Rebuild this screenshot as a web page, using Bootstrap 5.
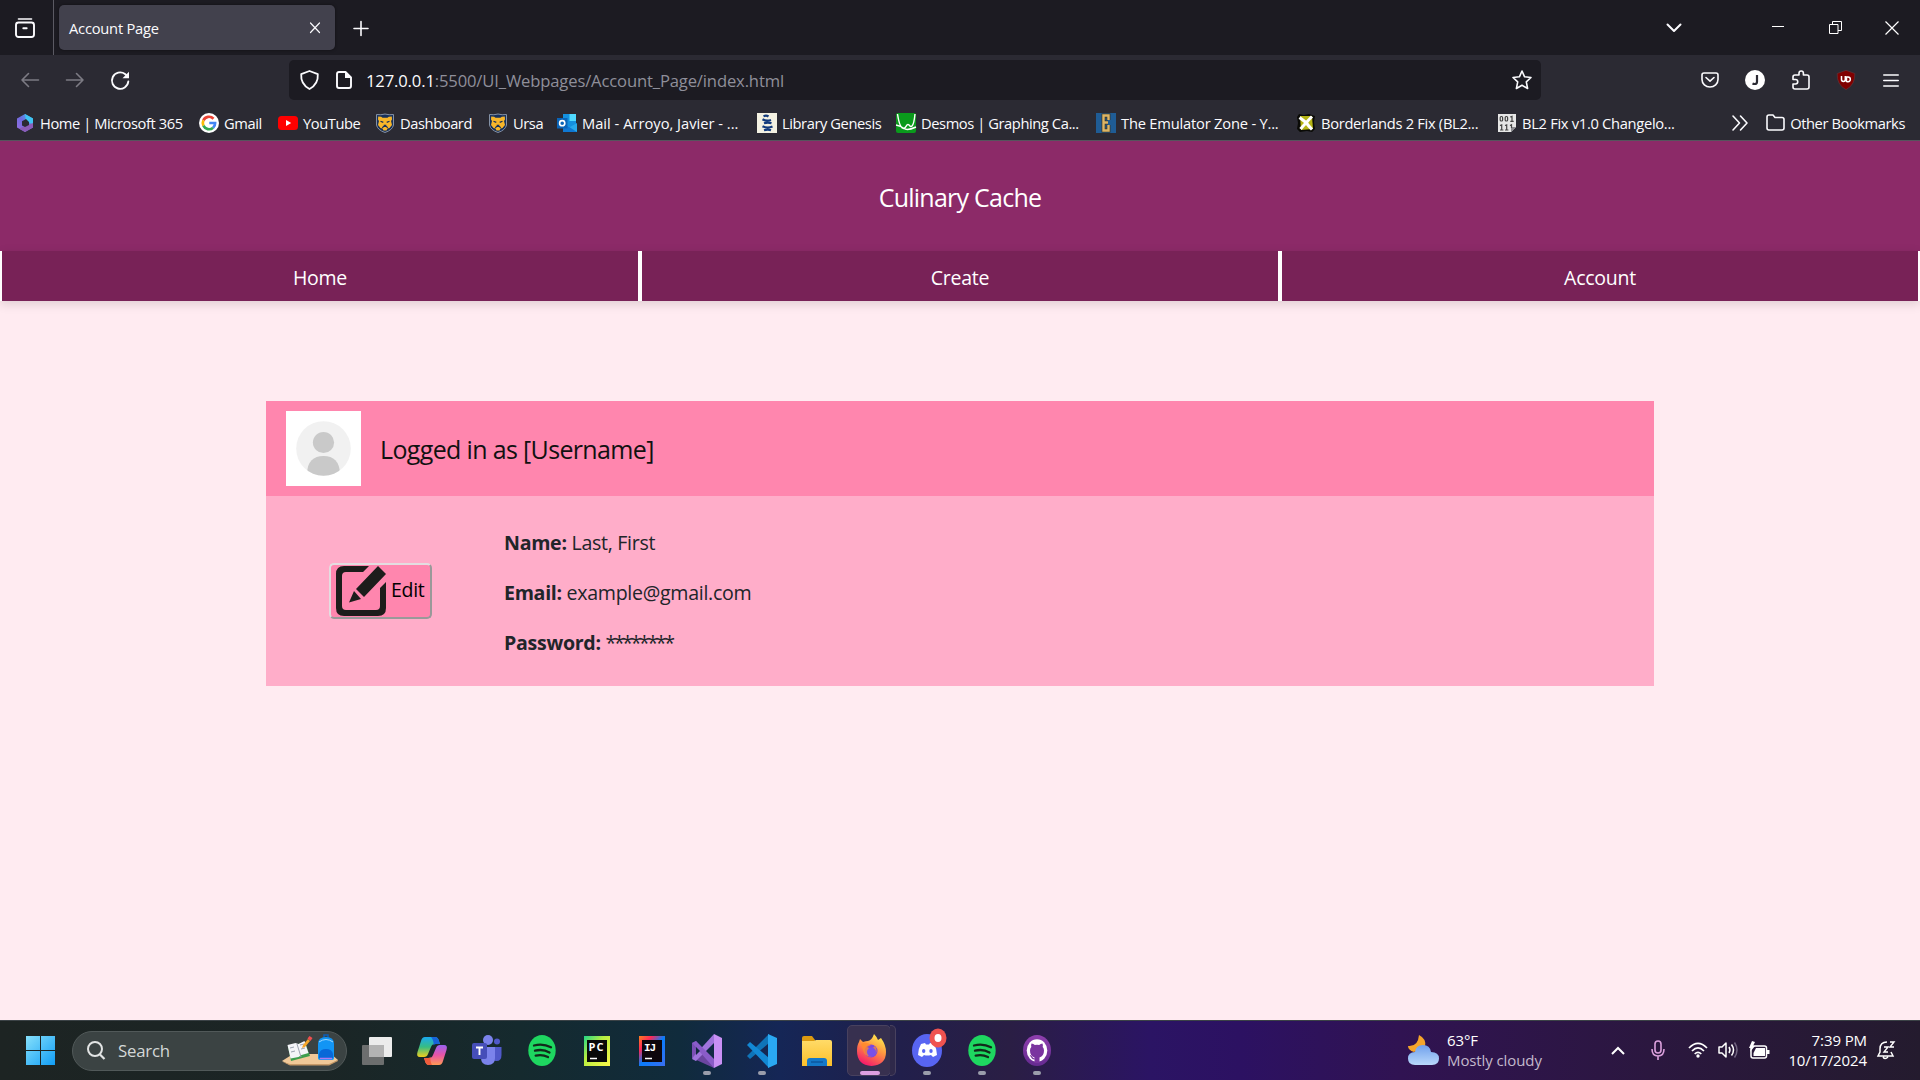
<!DOCTYPE html>
<html lang="en">
<head>
<meta charset="utf-8">
<meta name="viewport" content="width=device-width, initial-scale=1">
<title>Account Page</title>
<link rel="stylesheet" href="https://cdn.jsdelivr.net/npm/bootstrap@5.3.0/dist/css/bootstrap.min.css">
<style>
html, body { height: 1080px; overflow: hidden; }
body { font-family: "Open Sans", "Noto Sans", sans-serif; background: #ffebf1; }
svg { display: block; flex: none; overflow: visible; }
.ln { fill: none; stroke: #fbfbfe; stroke-width: 1.6; stroke-linecap: round; stroke-linejoin: round; }

/* browser window */
.tabstrip { height: 55px; background: #1c1b22; }
.recent { width: 54px; border-right: 1px solid #5b5a63; padding-left: 15px; }
.tab { width: 276px; height: 45px; margin-left: 5px; padding: 0 14px 0 10px; background: #42414d; border-radius: 5px; color: #fbfbfe; font-size: 14.7px; letter-spacing: -.22px; box-shadow: 0 0 3px rgba(0,0,0,.5); }
.tabname { padding-top: 2px; }
.newtab { margin-left: 18px; }
.wincontrols { padding-right: 21px; }
.toolbar { height: 52px; background: #2b2a33; padding-top: 5px; }
.navbtns { width: 289px; padding-left: 21px; gap: 26px; }
.urlbar { width: 1252px; height: 40px; background: #1c1b22; border-radius: 5px; padding: 0 9px 0 11px; font-size: 16.6px; letter-spacing: -.14px; color: #8f8f9a; }
.urlbar b { font-weight: 400; color: #fbfbfe; }
.url { margin-left: 14px; padding-top: 3px; }
.exts { padding-left: 160px; gap: 26px; }
.bookmarks { height: 34px; background: #2b2a33; border-bottom: 1px solid #55545c; padding: 0 15px 1px 15px; color: #fbfbfe; font-size: 14.7px; letter-spacing: -.42px; white-space: nowrap; }
.bookmarks span { padding-top: 1px; }
.bm { gap: 5px; flex: none; }
.fit-0 { letter-spacing: 0; }
.fit-2 { letter-spacing: -.2px; }
.fit-3 { letter-spacing: -.3px; }

/* page */
.site { height: 879px; }
.brandbar { height: 110px; background: #8c2a68; color: #fff; font-size: 25px; letter-spacing: -.75px; padding-top: 4px; }
.mainnav { height: 50px; box-shadow: 0 3px 10px rgba(0,0,0,.13); }
.mainnav a { background: #782257; border: solid #fff; border-width: 0 2px; color: #fff; font-size: 19.5px; letter-spacing: -.25px; text-decoration: none; padding-top: 4px; }
.panel { width: 1388px; margin: 100px auto 0; }
.panel-top { height: 95px; background: #ff86ae; padding: 0 20px; gap: 19px; font-size: 25px; letter-spacing: -.65px; color: #111; }
.login { padding-top: 2px; }
.panel-main { height: 190px; background: #ffadc9; color: #212529; font-size: 19.6px; letter-spacing: -.3px; }
.editcol { width: 238px; padding-left: 63px; }
.editbtn { width: 103px; height: 56px; background: #ff86ae; border: 2px solid; border-color: #e3dde0 #999 #999 #e3dde0; border-radius: 5px; padding: 0 5px; color: #000; font-size: 19.5px; letter-spacing: -.3px; gap: 5px; }
.edittext { padding-bottom: 3px; }
.info { gap: 20px; padding-top: 3px; }
.info > div { height: 30px; line-height: 30px; }
.stars { letter-spacing: -2.4px; }

/* taskbar */
.taskbar { height: 60px; border-top: 1px solid #3b4246; background: linear-gradient(90deg, #1d2423 0, #1b2525 320px, #152a2e 520px, #102b3c 680px, #152656 780px, #211f4b 900px, #2a1e44 1010px, #2b1464 1150px, #2c1162 1240px, #301352 1400px, #2b173f 1650px, #241b2e 1920px); color: #fff; }
.search { width: 275px; height: 40px; margin-left: 17px; border-radius: 20px; background: #3b4343; border: 1px solid #515959; color: #d4d8d8; font-size: 16.8px; letter-spacing: -.2px; padding: 0 7px 0 14px; gap: 13px; }
.app { width: 55px; height: 59px; }
.app i { position: absolute; bottom: 5px; left: 24px; width: 8px; height: 4px; border-radius: 2px; background: #9a9dab; }
.app.active::before { content: ""; position: absolute; left: 3px; top: 4px; width: 44px; height: 51px; border-radius: 5px; background: #37304f; border: 1px solid #48415e; }
.app.active::after { content: ""; position: absolute; left: 46px; top: 4px; width: 6px; height: 51px; border-radius: 0 5px 5px 0; border: 1px solid #48415e; border-left: 0; background: #2f294a; }
.app.active svg, .app.active i { position: absolute; z-index: 1; }
.app.active svg { left: 13px; top: 13px; }
.app.active i { width: 20px; left: 16px; background: #dd9fe2; }
.tray { font-size: 15px; letter-spacing: -.1px; line-height: 20px; padding-bottom: 1px; }
</style>
</head>
<body>
<svg width="0" height="0" class="position-absolute">
  <defs>
    <linearGradient id="gw" x1="0" y1="0" x2="1" y2="1"><stop stop-color="#86e0fb"/><stop offset="1" stop-color="#119df5"/></linearGradient>
    <linearGradient id="gm" x1="0" y1="1" x2="1" y2="0"><stop stop-color="#9b6ee0"/><stop offset=".5" stop-color="#6f6be0"/><stop offset="1" stop-color="#35c1f0"/></linearGradient>
    <linearGradient id="gc1" x1="0" y1="0" x2="0" y2="1"><stop stop-color="#1aa9f0"/><stop offset=".5" stop-color="#37bd82"/><stop offset="1" stop-color="#f2cf1d"/></linearGradient>
    <linearGradient id="gc2" x1="0" y1="0" x2="0" y2="1"><stop stop-color="#9a62f0"/><stop offset=".5" stop-color="#e854a6"/><stop offset="1" stop-color="#ff9a54"/></linearGradient>
    <linearGradient id="gpc" x1="0" y1="0" x2="1" y2="1"><stop stop-color="#21d789"/><stop offset=".4" stop-color="#b7ee40"/><stop offset="1" stop-color="#fcf84a"/></linearGradient>
    <linearGradient id="gij" x1="0" y1="0" x2="1" y2="1"><stop stop-color="#fc801d"/><stop offset=".25" stop-color="#fe2857"/><stop offset=".5" stop-color="#087cfa"/><stop offset="1" stop-color="#3b6ef0"/></linearGradient>
    <linearGradient id="gff" x1=".8" y1="0" x2=".3" y2="1"><stop stop-color="#fff44f"/><stop offset=".45" stop-color="#ff9640"/><stop offset="1" stop-color="#f5156c"/></linearGradient>
    <linearGradient id="gfo" x1="0" y1="0" x2="0" y2="1"><stop stop-color="#ffdb68"/><stop offset="1" stop-color="#fbbf2a"/></linearGradient>
    <linearGradient id="gcl" x1="0" y1="0" x2="0" y2="1"><stop stop-color="#6fa0ec"/><stop offset="1" stop-color="#b9d8fb"/></linearGradient>
    <linearGradient id="ggh" x1="0" y1="0" x2="0" y2="1"><stop stop-color="#8e3fae"/><stop offset="1" stop-color="#652a90"/></linearGradient>
    <symbol id="bear" viewBox="0 0 20 20"><path d="M1.500 1.500Q6 2.200 10 1Q14 2.200 18.500 1.500V12Q17.500 17 10 19.500Q2.500 17 1.500 12Z" fill="#17305a" stroke="#8592a6"/><path d="M3.200 3.500l3 .3 1.300 1h5l1.300-1 3-.3.200 3-1 1.500 1 4-2.500 3-2 .6-1 1.900h-3l-1-1.900-2-.6L3 12l1-4-1-1.500z" fill="#f8b62a"/><path d="M5.500 8.200l2.800 1.200M14.500 8.200l-2.800 1.200M8.700 12.300h2.600M7.300 14.800l1.200-1.300h3l1.200 1.300" stroke="#17305a" stroke-width="1.200" fill="none"/></symbol>
    <symbol id="spot" viewBox="0 0 28 31"><ellipse cx="14" cy="15.500" rx="13.700" ry="15.500" fill="#1ed760"/><path d="M6 10.500q9-2.500 17 1.800M7 15.700q8-2 14.500 1.800M7.700 20.600q6.600-1.600 12.300 1.500" fill="none" stroke="#122a1b" stroke-width="2.300" stroke-linecap="round"/></symbol>
  </defs>
</svg>

<header>
  <div class="tabstrip d-flex align-items-center">
    <div class="recent h-100 d-flex align-items-center">
      <svg width="20" height="20" viewBox="0 0 20 20"><path class="ln" d="M3.500 1h13"/><rect class="ln" style="stroke-width:1.900" x="1" y="4.500" width="18" height="14.500" rx="2.500"/><path class="ln" style="stroke-width:1.900" d="M8.300 10.300h3.400"/></svg>
    </div>
    <div class="tab d-flex align-items-center justify-content-between"><span class="tabname">Account Page</span>
      <svg width="12" height="12" viewBox="0 0 12 12"><path class="ln" style="stroke-width:1.200" d="M1.500 1l9 9.500M10.500 1l-9 9.500"/></svg></div>
    <svg class="newtab" width="16" height="16" viewBox="0 0 16 16"><path class="ln" d="M8 1.500v14M1 8.500h14"/></svg>
    <div class="wincontrols ms-auto d-flex align-items-center">
      <svg width="16" height="10" viewBox="0 0 16 10"><path class="ln" style="stroke-width:2" d="M1.500 1.500L8 8l6.500-6.500"/></svg>
      <svg width="12" height="2" viewBox="0 0 12 2" style="margin-left:90px"><path d="M0-1h12v1H0z" fill="#fff"/></svg>
      <svg width="13" height="13" viewBox="0 0 13 13" style="margin-left:45px"><path d="M.5 3.500h8.500v9H.5zM3.500 3.500V.5h9v9H9" fill="none" stroke="#fff"/></svg>
      <svg width="14" height="14" viewBox="0 0 14 14" style="margin-left:43px"><path d="M.5.5l13 13M13.500.5l-13 13" fill="none" stroke="#fff" stroke-width="1.200"/></svg>
    </div>
  </div>

  <div class="toolbar d-flex align-items-start">
    <div class="navbtns d-flex align-items-center" style="height:40px">
      <svg width="19" height="16" viewBox="0 0 19 16"><path class="ln" style="stroke:#7c7b84" d="M17.500 8H1M7.500 1.500L1 8 7.500 14.500"/></svg>
      <svg width="19" height="16" viewBox="0 0 19 16"><path class="ln" style="stroke:#7c7b84" d="M.5 8H17M10.500 1.500L17 8 10.500 14.500"/></svg>
      <svg width="19" height="19" viewBox="0 0 19 19"><path class="ln" style="stroke-width:1.900" d="M17.300 10.500A8.200 8.200 0 1 1 14 3l2 1.800"/><path d="M18 .8v6.500h-6.500z" fill="#fbfbfe"/></svg>
    </div>
    <div class="urlbar d-flex align-items-center">
      <svg width="19" height="20" viewBox="0 0 19 20"><path class="ln" style="stroke-width:1.800" d="M9.500 1L17.800 4.200Q18.500 14 9.500 19Q.5 14 1.200 4.200Z"/></svg>
      <svg width="16" height="18" viewBox="0 0 16 18" style="margin-left:17px"><path class="ln" style="stroke-width:1.900" d="M9.500 1H3Q1 1 1 3V15Q1 17 3 17H13Q15 17 15 15V6.500Z"/><path d="M9 1v6h6z" fill="#fbfbfe"/></svg>
      <span class="url"><b>127.0.0.1</b>:5500/UI_Webpages/Account_Page/index.html</span>
      <svg class="ms-auto" width="20" height="20" viewBox="0 0 20 20"><path class="ln" d="M10 1l2.600 5.800 6.400.7-4.700 4.300 1.300 6.700L10 15.300 4.400 18.500l1.300-6.700L1 7.500l6.400-.7z"/></svg>
    </div>
    <div class="exts d-flex align-items-center" style="height:40px">
      <svg width="18" height="16" viewBox="0 0 18 16"><path class="ln" d="M3 1h12q2 0 2 2v4.500a8 7.500 0 0 1-16 0V3q0-2 2-2zM5 5.500l4 3.700 4-3.700"/></svg>
      <svg width="20" height="20" viewBox="0 0 20 20"><circle cx="10" cy="10" r="10" fill="#fff"/><path class="ln" style="stroke:#2b2a33;stroke-width:2.200;stroke-linecap:butt" d="M12 5v6.700q0 2.300-2.300 2.300-1.200 0-2.200-.5"/></svg>
      <svg width="18" height="20" viewBox="0 0 18 20" style="margin-left:1px"><path class="ln" d="M7 5V3.200a2.200 2.200 0 0 1 4.400 0V5H15q2 0 2 2v10q0 2-2 2H3q-2 0-2-2v-3h2.500a2 2 0 0 0 0-4.500H1V7q0-2 2-2z"/></svg>
      <svg width="20" height="20" viewBox="0 0 20 20"><path d="M10 .3L18.800 3.500Q19.500 14.500 10 19.700Q.5 14.500 1.200 3.500Z" fill="#800000" stroke="#5d3a42" stroke-width=".6"/><path d="M5.500 6v3.500a1.900 1.900 0 0 0 3.800 0V6M10.500 11.700h1.500a2.300 2.300 0 0 0 0-4.700h-1.500v5" fill="none" stroke="#fff" stroke-width="1.500"/></svg>
      <svg width="16" height="13" viewBox="0 0 16 13" style="margin-left:1px"><path class="ln" d="M.8 1h14.400M.8 6.500h14.400M.8 12h14.400"/></svg>
    </div>
  </div>

  <nav class="bookmarks d-flex align-items-center">
    <div class="bm d-flex align-items-center" style="width:184px"><svg width="20" height="20" viewBox="0 0 20 20"><path d="M10 1l8 4.500v9L10 19l-8-4.500v-9z" fill="url(#gm)"/><path d="M10 1l8 4.500v6L11 8z" fill="#3fc4f3"/><path d="M18 10v4.500L10 19l-6-3.400z" fill="#8b5cb8"/><path d="M7 8.200L11 6l3 3v3l-4 2-3-1.500z" fill="#2b2a33"/></svg><span>Home | Microsoft 365</span></div>
    <div class="bm d-flex align-items-center" style="width:79px"><svg width="20" height="20" viewBox="0 0 20 20"><circle cx="10" cy="10" r="10" fill="#fff"/><g fill="none" stroke-width="2.700"><path d="M14.500 5.700A6.200 6.200 0 0 0 4.400 7.300" stroke="#ea4335"/><path d="M4.400 7.300a6.200 6.200 0 0 0 0 5.400" stroke="#fbbc05"/><path d="M4.400 12.700a6.200 6.200 0 0 0 9.700 2" stroke="#34a853"/><path d="M14.100 14.700A6.200 6.200 0 0 0 16.100 10H10.300" stroke="#4285f4"/></g></svg><span>Gmail</span></div>
    <div class="bm d-flex align-items-center" style="width:97px"><svg width="20" height="20" viewBox="0 0 20 20"><rect y="3" width="20" height="14" rx="3.500" fill="#f00"/><path d="M8 7l5.200 3L8 13z" fill="#fff"/></svg><span>YouTube</span></div>
    <div class="bm d-flex align-items-center" style="width:113px"><svg width="20" height="20"><use href="#bear"/></svg><span>Dashboard</span></div>
    <div class="bm d-flex align-items-center" style="width:69px"><svg width="20" height="20"><use href="#bear"/></svg><span>Ursa</span></div>
    <div class="bm fit-0 d-flex align-items-center" style="width:200px"><svg width="20" height="20" viewBox="0 0 20 20"><rect x="6" y="1" width="13" height="14" fill="#1490df"/><rect x="12.500" y="1" width="6.500" height="7" fill="#50d9ff"/><path d="M6 10l7 4 7-4v9H6z" fill="#28a8ea"/><path d="M6 10v9h14z" fill="#0f78d4"/><rect y="5" width="10.500" height="10.500" fill="#0a64b8"/><circle cx="5.200" cy="10.200" r="2.600" fill="none" stroke="#fff" stroke-width="1.600"/></svg><span>Mail - Arroyo, Javier - ...</span></div>
    <div class="bm d-flex align-items-center" style="width:139px"><svg width="20" height="20" viewBox="0 0 20 20"><path d="M0 0h20v20H0z" fill="#f3f1e2"/><path d="M6.500 3.200q3-1.200 5 .3M5.500 6.200q4 2.500 8.500.8M7 10.300q4-1.300 7.500 0M5.500 13.200q5 2.500 10 .3M7 17.200q4-1 7 0" stroke="#123a7c" stroke-width="2.200" fill="none"/></svg><span>Library Genesis</span></div>
    <div class="bm d-flex align-items-center" style="width:200px"><svg width="20" height="20" viewBox="0 0 20 20"><rect width="20" height="20" rx="2" fill="#0a9a1c"/><path d="M1.500 1C3 11 5 15.500 7.500 15.500S10 11.500 12 11.500 14 15 16 13 18.500 6 19 1M0 12q5 1 8 3.500t12-1.500" fill="none" stroke="#fff" stroke-width="1.400"/></svg><span>Desmos | Graphing Ca...</span></div>
    <div class="bm fit-2 d-flex align-items-center" style="width:200px"><svg width="20" height="20" viewBox="0 0 20 20"><path d="M0 0h20v20H0z" fill="#1f5c95"/><path d="M12.500 7V2.500h-5v15h5V12M8 9.500h4" fill="none" stroke="#3b3322" stroke-width="3.800"/><path d="M12.500 7V2.500h-5v15h5V12M8 9.500h4" fill="none" stroke="#dcb566" stroke-width="2.400"/></svg><span>The Emulator Zone - Y...</span></div>
    <div class="bm fit-3 d-flex align-items-center" style="width:201px"><svg width="20" height="20" viewBox="0 0 20 20"><path d="M3 1l5 1 5-1 6 2-1 6 1 7-3 3-5-1-7 1-3-3 1-6-1-6z" fill="#0a0a06"/><path d="M4 3h12l1 13-12 1z" fill="#b5b415"/><path d="M3.500 4.500q4 3 6.500 5 3 4 6 7M16 3.500q-4 4-6.500 7-3 3-5 5.500" stroke="#fff" stroke-width="3" fill="none"/></svg><span>Borderlands 2 Fix (BL2...</span></div>
    <div class="bm fit-3 d-flex align-items-center"><svg width="20" height="20" viewBox="0 0 20 20"><path d="M1 1h18v13l-5 5H1z" fill="#e6e6e6"/><path d="M14 19v-5h5z" fill="#8b8b90"/><g fill="none" stroke="#444" stroke-width="1.200"><rect x="3.200" y="3.500" width="2.400" height="4.500" rx="1"/><rect x="8.200" y="3.500" width="2.400" height="4.500" rx="1"/><path d="M13.200 4L15 3.300V8.300M13.300 8.300h3.400M3 12.500l1.700-.7V17M3 17h3.400M8 12.500l1.700-.7V17M8 17h3.400M13 12.500l1.500-.7V15"/></g></svg><span>BL2 Fix v1.0 Changelo...</span></div>
    <div class="ms-auto d-flex align-items-center">
      <svg width="16" height="16" viewBox="0 0 16 16"><path class="ln" d="M1 1l6.500 7L1 15M8.500 1L15 8l-6.500 7"/></svg>
      <svg width="19" height="17" viewBox="0 0 19 17" style="margin:0 5px 0 18px"><path class="ln" d="M1 3q0-2 2-2h4l2 2.500h7q2 0 2 2V14q0 2-2 2H3q-2 0-2-2z"/></svg>
      <span>Other Bookmarks</span>
    </div>
  </nav>
</header>

<main class="site">
  <div class="brandbar d-flex align-items-center justify-content-center"><span class="brandname">Culinary Cache</span></div>
  <nav class="mainnav row g-0">
    <a href="#" class="col d-flex align-items-center justify-content-center">Home</a>
    <a href="#" class="col d-flex align-items-center justify-content-center">Create</a>
    <a href="#" class="col d-flex align-items-center justify-content-center">Account</a>
  </nav>
  <section class="panel">
    <div class="panel-top d-flex align-items-center">
      <svg width="75" height="75" viewBox="0 0 75 75"><path d="M0 0h75v75H0z" fill="#fff"/><clipPath id="av"><circle cx="37.500" cy="37.500" r="27.300"/></clipPath><circle cx="37.500" cy="37.500" r="27.300" fill="#f1f1f1"/><circle cx="37.500" cy="31.500" r="10.600" fill="#c9c9c9"/><path clip-path="url(#av)" d="M21 62q1-17 16.500-17T54 62v5H21z" fill="#c9c9c9"/></svg>
      <span class="login">Logged in as [Username]</span>
    </div>
    <div class="panel-main d-flex">
      <div class="editcol d-flex align-items-center">
        <button class="editbtn d-flex align-items-center"><svg width="50" height="50" viewBox="0 0 50 50"><path d="M33 0H8Q0 0 0 8V42q0 8 8 8H42q8 0 8-8V16l-6 6V40q0 4-4 4H10q-4 0-4-4V10q0-4 4-4H27z" fill="#1d1d1b"/><path d="M42 0l8 8L28 31l-8-8z M18 25l7 8-12 3.500z" fill="#1d1d1b"/></svg><span class="edittext">Edit</span></button>
      </div>
      <div class="info d-flex flex-column justify-content-center">
        <div><strong>Name:</strong> Last, First</div>
        <div><strong>Email:</strong> example@gmail.com</div>
        <div><strong>Password:</strong> <span class="stars">********</span></div>
      </div>
    </div>
  </section>
</main>

<footer class="taskbar d-flex align-items-center">
  <svg width="29" height="29" viewBox="0 0 29 29" style="margin-left:26px"><path d="M0 0h14v14H0zM15 0h14v14H15zM0 15h14v14H0zM15 15h14v14H15z" fill="url(#gw)"/></svg>
  <div class="search d-flex align-items-center">
    <svg width="18" height="19" viewBox="0 0 18 19"><circle cx="8" cy="8" r="7" fill="none" stroke="#e2e4e4" stroke-width="2"/><path d="M13 13.500l4.500 4.500" stroke="#e2e4e4" stroke-width="2.200"/></svg>
    <span>Search</span>
    <svg class="ms-auto" width="58" height="32" viewBox="0 0 58 32"><path d="M1 26L12 19h38l7 6-9 5H9z" fill="#f0c898"/><path d="M1 26.500l8 2.500h39l9-4v1l-9 4.500H9z" fill="#c89a68"/><path d="M7 12l17-5 5 14-19 5z" fill="#3d9e4d"/><path d="M6.500 10l8-2 3 1 6-3 4 12-7 2-3 2-8 1.500z" fill="#f4f5f8"/><path d="M16 9l4 13M9 13l4-1M10 17l4-1M19 10l4-1M20 14l4-1" stroke="#9ba3b0"/><path d="M22 10l5-6 2 2-5 6-3 1z" fill="#f5a629"/><path d="M26.500 3.500l2-2.500 3 2-2 3z" fill="#f04f4f"/><path d="M43 3V0h4v3" fill="none" stroke="#0c5fb8" stroke-width="1.500"/><path d="M37 23V9q0-7 8-7t8 7v14q0 2-2 2H39q-2 0-2-2z" fill="#1295f5"/><path d="M38 7q7-5 14 0" stroke="#9ed8ff" fill="none"/><path d="M38 19q1-5 7-5t7 5v4H38z" fill="#0968d8"/><path d="M39 23.500h12" stroke="#b07af0" stroke-width="1.500"/></svg>
  </div>
  <div class="d-flex" style="margin-left:2px">
    <div class="app position-relative d-flex align-items-center justify-content-center"><svg width="30" height="28" viewBox="0 0 30 28"><rect x="7" width="23" height="20" rx="1" fill="#ececec"/><rect y="8" width="22" height="20" rx="1" fill="#6c6e6e"/><path d="M7 8h15v12H7z" fill="#b3b3b3"/></svg></div>
    <div class="app position-relative d-flex align-items-center justify-content-center"><svg width="30" height="28" viewBox="0 0 30 28"><path d="M8 0h10q3 0 4 4l1 3h-5q-3 0-4 3l-3 7q-1 3-4 3H3q-4 0-2.500-5L4 4q1-4 4-4z" fill="url(#gc1)"/><path d="M14 0h4q3 0 4 4l1 3h-4q-2 0-2.500 1.500Q17 3 14 0z" fill="#1763d8"/><path d="M22 28H12q-3 0-4-4l-1-3h5q3 0 4-3l3-7q1-3 4-3h4q4 0 2.500 5L26 24q-1 4-4 4z" fill="url(#gc2)"/><path d="M15 28h-3q-3 0-4-4l-1-3h4q2 0 2.500-1.500Q13 25 15 28z" fill="#f05c3c"/></svg></div>
    <div class="app position-relative d-flex align-items-center justify-content-center"><svg width="30" height="31" viewBox="0 0 30 31"><circle cx="16" cy="5" r="5" fill="#7b83eb"/><circle cx="25" cy="6.500" r="3" fill="#5059c9"/><path d="M19 12h10.500v8q0 6-5 6t-5-6z" fill="#5059c9"/><path d="M9 12h14v11q0 7-7 7t-7-7z" fill="#7b83eb"/><rect y="8" width="15" height="16" rx="2" fill="#464eb8"/><path d="M4 12.500h7M7.500 12.500V20" stroke="#fff" stroke-width="1.900"/></svg></div>
    <div class="app position-relative d-flex align-items-center justify-content-center"><svg width="28" height="31"><use href="#spot"/></svg></div>
    <div class="app position-relative d-flex align-items-center justify-content-center"><svg width="26" height="30" viewBox="0 0 26 30"><path d="M0 0h26v30H0z" fill="url(#gpc)"/><path d="M3 4h20v22H3z" fill="#090909"/><text x="4.500" y="15" font-size="11" font-weight="700" fill="#fff" textLength="15">PC</text><path d="M6 22.500h7" stroke="#fff" stroke-width="1.500"/></svg></div>
    <div class="app position-relative d-flex align-items-center justify-content-center"><svg width="26" height="30" viewBox="0 0 26 30"><path d="M0 0h26v30H0z" fill="url(#gij)"/><path d="M3 4h20v22H3z" fill="#0d060c"/><text x="5" y="15" font-size="11" font-weight="700" font-family="Liberation Mono, monospace" fill="#fff" textLength="12">IJ</text><path d="M6 22.500h7" stroke="#fff" stroke-width="1.500"/></svg></div>
    <div class="app position-relative d-flex align-items-center justify-content-center"><svg width="30" height="34" viewBox="0 0 30 34"><path d="M0 9l4-2 18 21v6L0 24z" fill="#6b45a0"/><path d="M0 9v15l4 3 2-10z" fill="#7b4fb4"/><path d="M0 25l4 2L22 9V0L2 22z" fill="#a074dc"/><path d="M0 9l4-2 18 18v9z" fill="#8a5cc8"/><path d="M22 0l8 4v26l-8 4z" fill="#c990f4"/><path d="M4 13l4 4-4 4z" fill="#11283d"/></svg><i></i></div>
    <div class="app position-relative d-flex align-items-center justify-content-center"><svg width="30" height="34" viewBox="0 0 30 34"><path d="M0 22l3 3 19-16V0z" fill="#0f74b8"/><path d="M0 11l3-3 19 16v10z" fill="#1288d4"/><path d="M21 0l9 4v26l-9 4z" fill="#2aa8f2"/></svg><i></i></div>
    <div class="app position-relative d-flex align-items-center justify-content-center"><svg width="30" height="30" viewBox="0 0 30 30"><path d="M0 2q0-2 2-2h8l3 4v4H0z" fill="#dc9a10"/><path d="M0 5h12l2-1h14q2 0 2 2v24H0z" fill="url(#gfo)"/><path d="M5 30v-5q0-3 3-3h14q3 0 3 3v5z" fill="#1478c8"/><path d="M9 26h12" stroke="#0a4f94" stroke-width="1.200"/></svg></div>
    <div class="app active position-relative"><svg width="29" height="32" viewBox="0 0 29 32"><path d="M17 0q3 3 4 6l3-2q5 7 5 14 0 13-14.500 14Q0 31 0 17q0-6 2-9l1-3 3 3q3-1 5-1 4-1 6-7z" fill="url(#gff)"/><circle cx="14" cy="17" r="6.500" fill="#7a47e0"/><path d="M4 10q5-3 10 1l-4 2q5 3 8-1 4 6-2 10-8 2-10-6z" fill="#ff8a2a" opacity=".8"/><circle cx="14.500" cy="18" r="4.500" fill="#7850e8"/></svg><i></i></div>
    <div class="app position-relative d-flex align-items-center justify-content-center"><svg width="30" height="33" viewBox="0 0 30 33"><ellipse cx="15" cy="16.500" rx="15" ry="16.500" fill="#5865f2"/><path d="M9 10l4-1 1 1.500h3L18 9l4 1q3 5 3 11l-4 2-2-2q-4 1-7 0l-2 2-4-2q0-6 3-11z" fill="#fff"/><ellipse cx="11.700" cy="17" rx="1.700" ry="2" fill="#5865f2"/><ellipse cx="19" cy="17" rx="1.700" ry="2" fill="#5865f2"/><ellipse cx="26" cy="4" rx="8.500" ry="9.500" fill="#ef5350"/><ellipse cx="26" cy="4" rx="3.500" ry="4" fill="#fff"/></svg><i></i></div>
    <div class="app position-relative d-flex align-items-center justify-content-center"><svg width="28" height="31"><use href="#spot"/></svg><i></i></div>
    <div class="app position-relative d-flex align-items-center justify-content-center"><svg width="28" height="31" viewBox="0 0 28 31"><ellipse cx="14" cy="15.500" rx="14" ry="15.500" fill="url(#ggh)"/><ellipse cx="14" cy="15.500" rx="10.300" ry="11.300" fill="#fff"/><path d="M11.500 28v-5.500Q7 21 7 15.500q0-2.200 1.300-3.500-.5-2 .2-3.500 2 .2 3.300 1.500 2.200-.7 4.400 0 1.300-1.300 3.300-1.500.7 1.500.2 3.500Q21 13.300 21 15.500q0 5.500-4.500 7V28z" fill="#7a349f"/><path d="M7 20.500q1.500.5 2 2t2.700 1.300" fill="none" stroke="#7a349f" stroke-width="1.300"/></svg><i></i></div>
  </div>
  <div class="tray ms-auto d-flex align-items-center">
    <svg width="31" height="31" viewBox="0 0 31 31"><path d="M11 0q8 4 6 12L6 17Q0 15 0 11q10 1 11-11z" fill="#f5a52a"/><path d="M7 30q-7 0-7-6.500T7 17Q8 10 15 10t8 7q8 0 8 6.500T24 30z" fill="url(#gcl)"/></svg>
    <div class="weather" style="margin-left:8px;width:164px"><div>63°F</div><div style="color:#c3b9cc">Mostly cloudy</div></div>
    <svg width="14" height="9" viewBox="0 0 14 9"><path d="M1 8l6-6 6 6" fill="none" stroke="#fff" stroke-width="2"/></svg>
    <svg width="14" height="20" viewBox="0 0 14 20" style="margin-left:26px"><rect x="4" y="1" width="6" height="12" rx="3" fill="none" stroke="#dba0dc" stroke-width="1.600"/><path d="M1 9q0 7 6 7t6-7M7 16v4" fill="none" stroke="#dba0dc" stroke-width="1.600"/></svg>
    <svg width="20" height="16" viewBox="0 0 20 16" style="margin-left:23px"><path d="M1 6Q10-3 19 6M4 9q6-6 12 0M6.700 12q3.300-3.300 6.600 0" fill="none" stroke="#fff" stroke-width="1.700"/><circle cx="10" cy="14" r="1.700" fill="#fff"/></svg>
    <svg width="21" height="16" viewBox="0 0 21 16" style="margin-left:10px"><path d="M1 5h3l4-4v14l-4-4H1zM11 5q2 3 0 6M13.500 2.500q4 5.500 0 11" fill="none" stroke="#fff" stroke-width="1.500" stroke-linejoin="round"/><path d="M16.500.5q5 7.500 0 15" fill="none" stroke="#716480" stroke-width="1.500"/></svg>
    <svg width="21" height="17" viewBox="0 0 21 17" style="margin-left:10px"><rect x="2" y="4" width="15.500" height="12" rx="2" fill="none" stroke="#fff" stroke-width="1.500"/><path d="M7 6h9v8H4.500V11zM18 8h2.500v4H18z" fill="#fff"/><path d="M3-1L0 6h2l-1 4 5-6H4l2-4z" fill="#fff"/></svg>
    <div class="clock text-end" style="width:97px"><div>7:39 PM</div><div>10/17/2024</div></div>
    <svg width="19" height="19" viewBox="0 0 19 19" style="margin:0 24px 0 10px"><path d="M10 1Q3 1 3 8v3l-2 4h15l-2-4M6 16q2 3 5 0" fill="none" stroke="#fff" stroke-width="1.500"/><path d="M7 6h4l-4 5h4M13 1h4l-4 5h4" fill="none" stroke="#fff" stroke-width="1.400"/></svg>
  </div>
</footer>
<script src="https://cdn.jsdelivr.net/npm/bootstrap@5.3.0/dist/js/bootstrap.bundle.min.js"></script>
</body>
</html>
